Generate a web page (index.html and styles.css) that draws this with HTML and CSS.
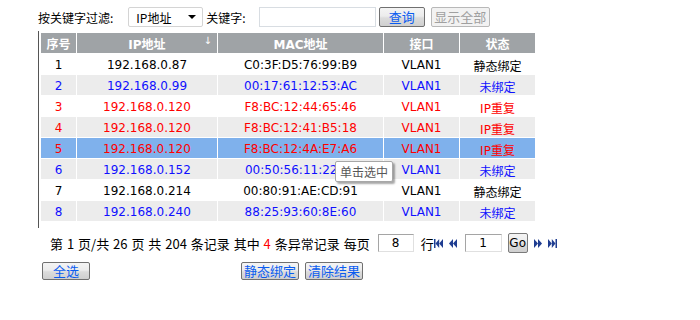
FILE: index.html
```html
<!DOCTYPE html>
<html lang="zh-CN">

<head>
    <meta charset="UTF-8">
    <meta name="viewport" content="width=device-width, initial-scale=1.0">
    <title>ARP列表</title>
    <link rel="stylesheet" href="styles.css">
</head>

<body>
    <div class="toolbar">
        <label for="field">按关键字过滤:</label>
        <span class="select">
            <select id="field" name="field">
                <option>IP地址</option>
                <option>MAC地址</option>
            </select>
        </span>
        <label for="keyword">关键字:</label>
        <input type="text" id="keyword" name="keyword" class="keyword">
        <button class="btn">查询</button>
        <button class="btn" disabled>显示全部</button>
    </div>

    <div class="grid">
        <table class="list">
            <thead>
                <tr>
                    <th class="c-no">序号</th>
                    <th class="c-ip">IP地址<span class="sort">↓</span></th>
                    <th class="c-mac">MAC地址</th>
                    <th class="c-if">接口</th>
                    <th class="c-st">状态</th>
                </tr>
            </thead>
            <tbody>
                <tr class="static">
                    <td>1</td><td>192.168.0.87</td><td>C0:3F:D5:76:99:B9</td><td>VLAN1</td><td>静态绑定</td>
                </tr>
                <tr class="free odd">
                    <td>2</td><td>192.168.0.99</td><td>00:17:61:12:53:AC</td><td>VLAN1</td><td>未绑定</td>
                </tr>
                <tr class="dup">
                    <td>3</td><td>192.168.0.120</td><td>F8:BC:12:44:65:46</td><td>VLAN1</td><td>IP重复</td>
                </tr>
                <tr class="dup odd">
                    <td>4</td><td>192.168.0.120</td><td>F8:BC:12:41:B5:18</td><td>VLAN1</td><td>IP重复</td>
                </tr>
                <tr class="dup selected">
                    <td>5</td><td>192.168.0.120</td><td>F8:BC:12:4A:E7:A6</td><td>VLAN1</td><td>IP重复</td>
                </tr>
                <tr class="free odd">
                    <td>6</td><td>192.168.0.152</td><td>00:50:56:11:22:3F</td><td>VLAN1</td><td>未绑定</td>
                </tr>
                <tr class="static">
                    <td>7</td><td>192.168.0.214</td><td>00:80:91:AE:CD:91</td><td>VLAN1</td><td>静态绑定</td>
                </tr>
                <tr class="free odd">
                    <td>8</td><td>192.168.0.240</td><td>88:25:93:60:8E:60</td><td>VLAN1</td><td>未绑定</td>
                </tr>
            </tbody>
        </table>
        <div class="tip">单击选中</div>
    </div>

    <div class="pager">
        <span class="info">第 1 页/共 26 页 共 204 条记录 其中 <em>4</em> 条异常记录 每页</span>
        <input type="text" class="num rows" value="8">
        <span class="info">行</span>
        <a class="nav first" href="#" title="首页">
            <svg width="9" height="9" viewBox="0 0 9 9"><rect x="0" y="0" width="1.5" height="9"/><polygon points="5.2,0 1.5,4.5 5.2,9"/><polygon points="9,0 5.2,4.5 9,9"/></svg>
        </a>
        <a class="nav" href="#" title="上一页">
            <svg width="8" height="9" viewBox="0 0 8 9"><polygon points="4,0 0,4.5 4,9"/><polygon points="8,0 4,4.5 8,9"/></svg>
        </a>
        <input type="text" class="num page" value="1">
        <button class="btn go">Go</button>
        <a class="nav" href="#" title="下一页">
            <svg width="8" height="9" viewBox="0 0 8 9"><polygon points="0,0 4,4.5 0,9"/><polygon points="4,0 8,4.5 4,9"/></svg>
        </a>
        <a class="nav" href="#" title="末页">
            <svg width="9" height="9" viewBox="0 0 9 9"><polygon points="0,0 3.8,4.5 0,9"/><polygon points="3.8,0 7.5,4.5 3.8,9"/><rect x="7.5" y="0" width="1.5" height="9"/></svg>
        </a>
    </div>

    <div class="actions">
        <button class="btn wide">全选</button>
        <span class="right">
            <button class="btn">静态绑定</button>
            <button class="btn">清除结果</button>
        </span>
    </div>
</body>

</html>
```

FILE: styles.css
```css
body {
    margin: 0;
    padding: 7px 0 0 38px;
    font-family: "DejaVu Sans", "Noto Sans CJK SC", sans-serif;
    font-size: 12px;
    color: #000;
    background: #fff;
}

/* toolbar */
.toolbar {
    display: flex;
    align-items: center;
    height: 20px;
    font-family: "Noto Sans CJK SC", sans-serif;
    font-size: 12px;
}

.toolbar label {
    margin-right: 15px;
}

.toolbar label[for=keyword] {
    margin-right: 13px;
}

.select {
    position: relative;
    display: inline-block;
    width: 75px;
    height: 20px;
    margin-right: 3px;
}

.select select {
    appearance: none;
    -webkit-appearance: none;
    width: 75px;
    height: 20px;
    border: 1px solid #d4d4d4;
    border-radius: 2px;
    background: #fff;
    padding: 0 0 0 7px;
    font-family: "Noto Sans CJK SC", sans-serif;
    font-size: 12px;
    color: #000;
}

.select::after {
    content: "";
    position: absolute;
    right: 7px;
    top: 8px;
    border-left: 4px solid transparent;
    border-right: 4px solid transparent;
    border-top: 4px solid #000;
    pointer-events: none;
}

.keyword {
    width: 117px;
    height: 20px;
    box-sizing: border-box;
    border: 1px solid #d8dde2;
    margin: 0 3px 0 0;
    padding: 0 3px;
}

.btn {
    height: 19px;
    padding: 0 7px;
    border: 1px solid #707070;
    border-radius: 2px;
    background: linear-gradient(#f4f4f4, #ececec 45%, #dcdcdc 55%, #cfcfcf);
    color: #0a5cf0;
    font-family: "Noto Sans CJK SC", sans-serif;
    font-size: 13px;
    line-height: 16px;
    margin-right: 6px;
}

.toolbar .btn {
    height: 20px;
    width: 46px;
}

.toolbar .btn[disabled] {
    width: 59px;
    padding: 0;
    color: #a0a0a0;
    border-color: #b8b8b8;
    background: #f2f2f2;
}

/* grid */
.grid {
    position: relative;
    margin-top: 4px;
    padding: 1px 0 6px 1px;
    border-left: 1px solid #555;
    width: 500px;
}

.list {
    border-collapse: separate;
    border-spacing: 1px;
    table-layout: fixed;
}

.list th,
.list td {
    height: 20px;
    padding: 0;
    text-align: center;
    white-space: nowrap;
    overflow: hidden;
}

.list td {
    padding-top: 2px;
    height: 18px;
}

.list th {
    background: #9fa3a6;
    color: #fff;
    font-weight: bold;
    font-size: 12px;
    position: relative;
}

.c-no { width: 35px; }
.c-ip { width: 140px; }
.c-mac { width: 165px; }
.c-if { width: 75px; }
.c-st { width: 75px; }

.sort {
    position: absolute;
    right: 5px;
    top: 2px;
    font-size: 10px;
    font-weight: normal;
}

.list tr.odd td {
    background: #ececec;
}

.list tr.static td {
    color: #000;
}

.list tr.free td {
    color: #1010ff;
}

.list tr.dup td {
    color: #ff0000;
}

.list tr.selected td {
    background: #7fb1ec;
}

.tip {
    position: absolute;
    left: 296px;
    top: 130px;
    width: 58px;
    height: 21px;
    box-sizing: border-box;
    border: 1px solid #a7a7a7;
    border-radius: 2px;
    background: #fff;
    color: #575757;
    font-family: "Noto Sans CJK SC", sans-serif;
    font-size: 12px;
    line-height: 19px;
    text-align: center;
    box-shadow: 2px 2px 2px rgba(0, 0, 0, 0.35);
}

/* pager */
.pager {
    display: flex;
    align-items: center;
    height: 20px;
    margin-top: 5px;
    padding-left: 12px;
}

.info {
    font-family: "Noto Sans CJK SC", sans-serif;
    font-size: 13px;
    word-spacing: 1px;
}

.pager em {
    font-style: normal;
    color: #ff0000;
}

.num {
    height: 18px;
    box-sizing: border-box;
    border: 1px solid #a5a5a5;
    border-right-color: #e0e0e0;
    border-bottom-color: #e0e0e0;
    text-align: center;
    font-family: "DejaVu Sans", sans-serif;
    font-size: 12px;
    padding: 0;
}

.rows {
    width: 36px;
    margin: 0 7px 0 8px;
}

.page {
    width: 37px;
    margin: 0 6px 0 8px;
}

.nav {
    display: inline-flex;
    align-items: center;
    fill: #1f3d91;
    margin-left: 6px;
}

.nav.first {
    margin-left: 0;
}

.go {
    width: 20px;
    height: 20px;
    padding: 0;
    margin: 0;
    color: #000;
    font-family: "DejaVu Sans", sans-serif;
    font-size: 12px;
    border-color: #7a7a7a;
}

/* actions */
.actions {
    display: flex;
    margin-top: 9px;
    padding-left: 4px;
}

.actions .btn {
    height: 18px;
    padding: 0 2px;
}

.actions .wide {
    width: 48px;
}

.right {
    margin-left: 145px;
    display: flex;
}
```
